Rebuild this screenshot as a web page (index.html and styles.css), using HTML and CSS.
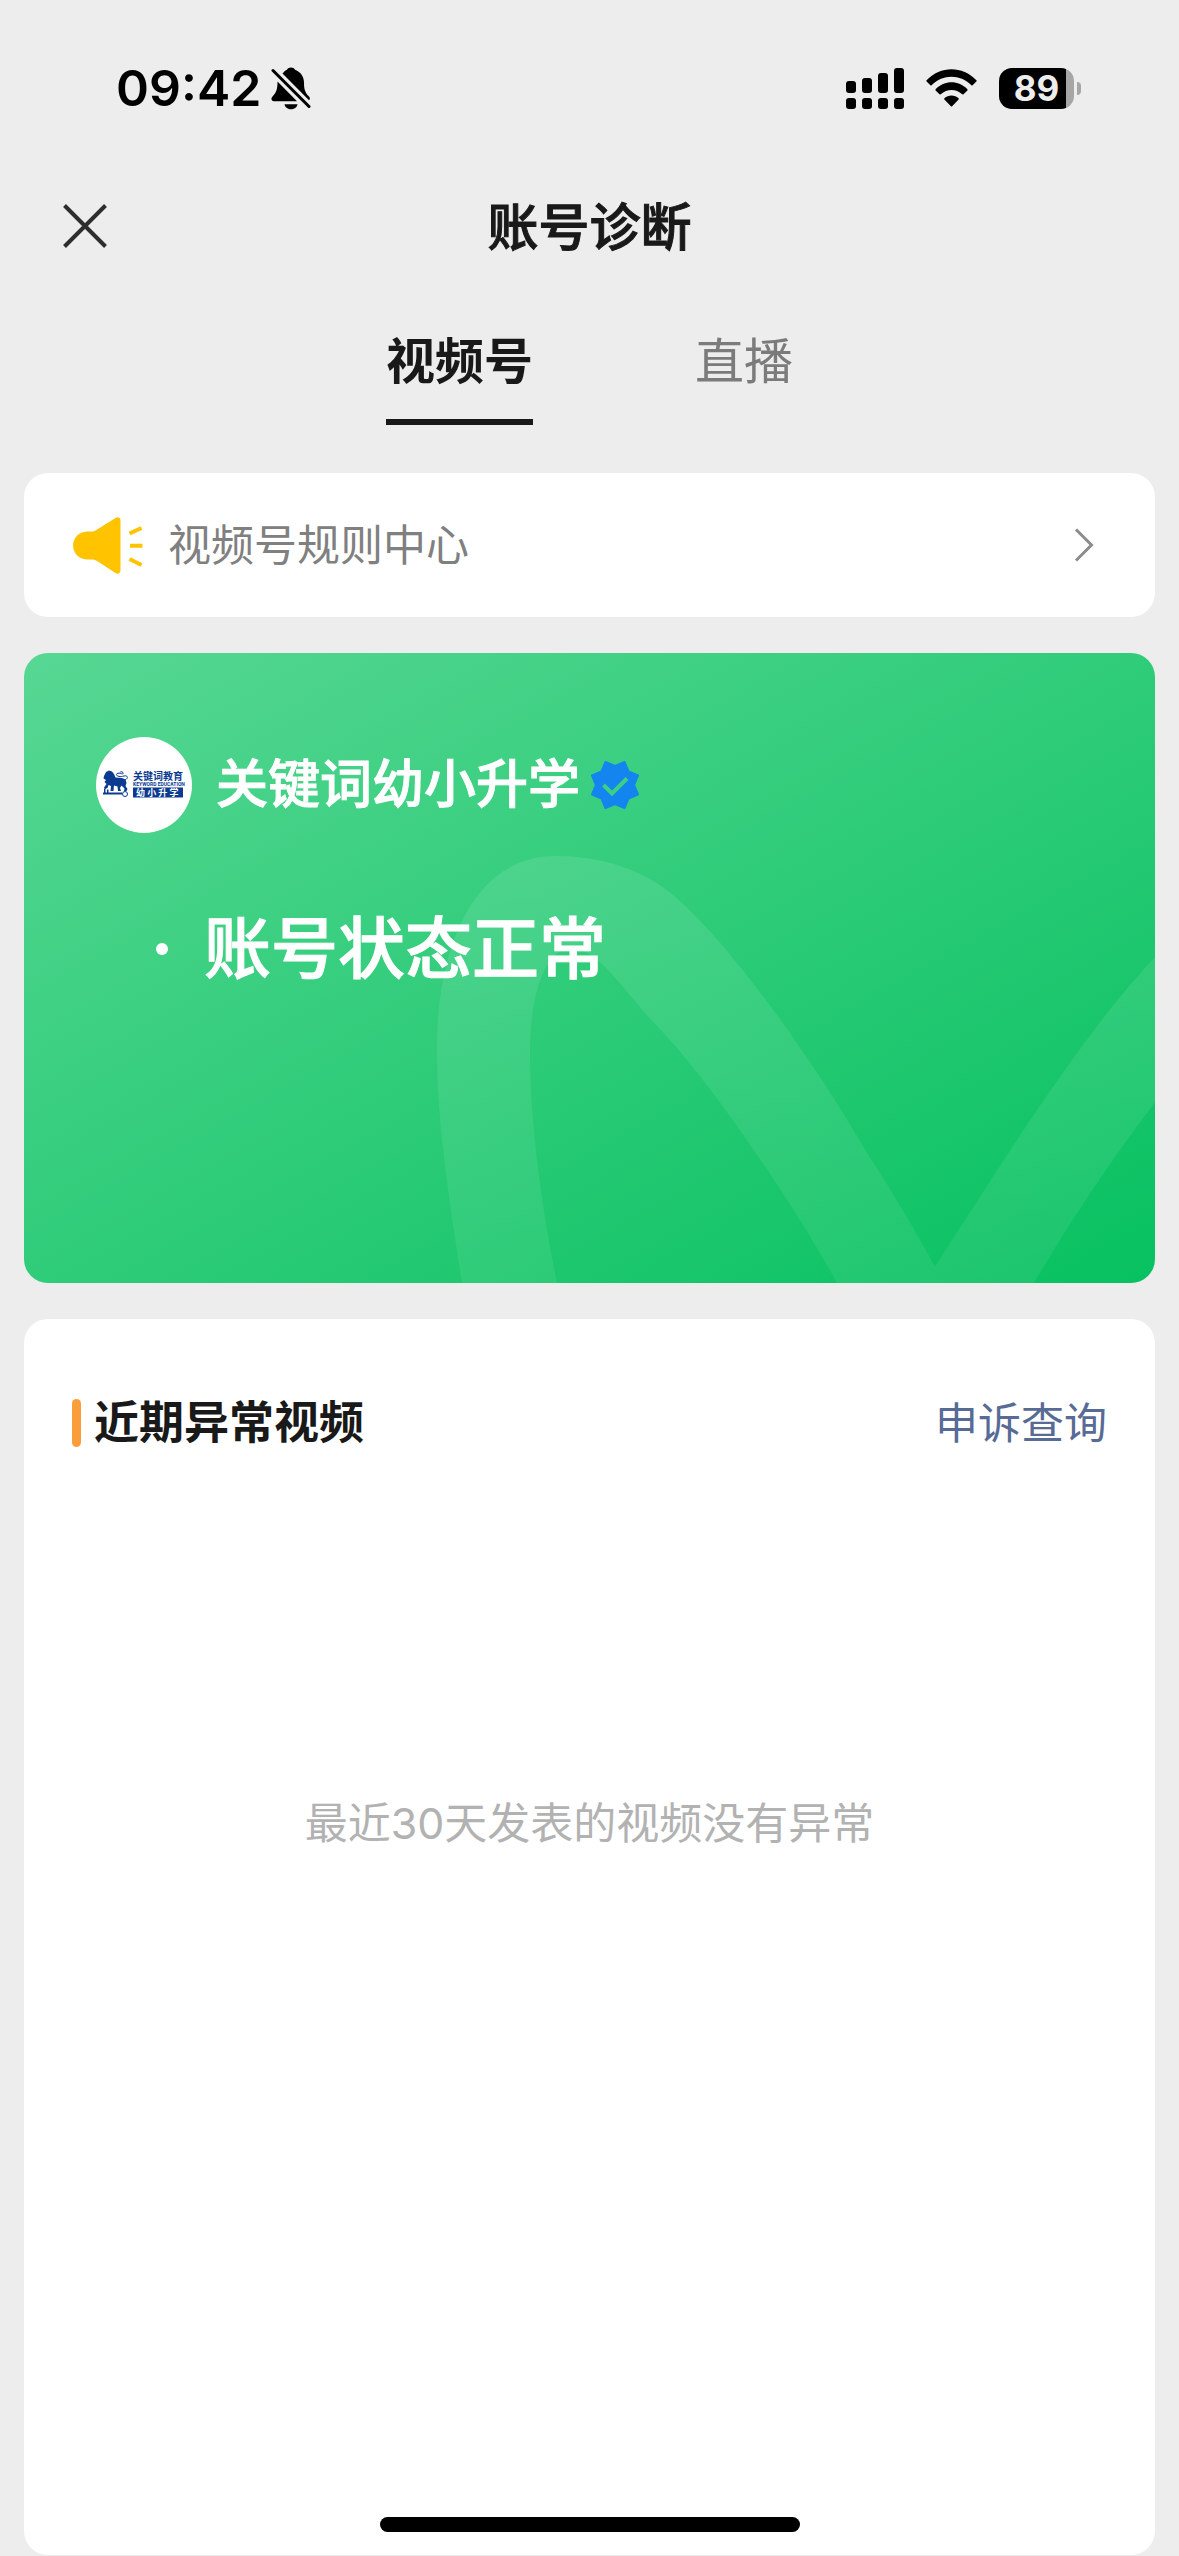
FILE: index.html
```html
<!DOCTYPE html>
<html lang="zh-CN">
<head>
    <meta charset="UTF-8">
    <meta name="viewport" content="width=device-width, initial-scale=1.0">
    <title>账号诊断</title>
    <link rel="stylesheet" href="styles.css">
</head>
<body>
    <!-- Status Bar -->
    <div class="status-bar">
        <div class="status-left">
            <span class="time">09:42</span>
            <svg class="bell" viewBox="0 0 40 43" width="40" height="43">
                <path d="M11.5 6.5C13 4.5 14.500 3.500 16 2.800C17.200-.2 22.800-.2 24 2.800C30 5 33 10 33 16C33 23 34.500 26 38 29.500C39.300 31 39 32.500 38 33.300Z"/>
                <path d="M6.500 14.500L26 34.300H3C.5 34.300-.5 31.500 1.500 29.500C5.500 25.500 6.500 22 6.500 14.500Z"/>
                <path d="M13.500 37.300H26.500C25.500 44 14.500 44 13.500 37.300Z"/>
                <path d="M2 3.500L38 39.500" stroke="#ededed" stroke-width="7"/>
                <path d="M2 3.500L38 39.500" stroke="#000" stroke-width="3" stroke-linecap="round"/>
            </svg>
        </div>
        <div class="status-right">
            <svg viewBox="0 0 58 41" width="58" height="41">
                <rect x="0" y="13" width="10" height="12" rx="3"/>
                <rect x="16" y="10" width="10" height="15" rx="3"/>
                <rect x="32" y="5" width="10" height="20" rx="3"/>
                <rect x="48" y="0" width="10" height="25" rx="3"/>
                <rect x="0" y="30" width="10" height="11" rx="3"/>
                <rect x="16" y="30" width="10" height="11" rx="3"/>
                <rect x="32" y="30" width="10" height="11" rx="3"/>
                <rect x="48" y="30" width="10" height="11" rx="3"/>
            </svg>
            <svg class="wifi" viewBox="0 0 51 38" width="51" height="38">
                <path d="M.6 11.300C14.500-3.400 36.500-3.400 50.400 11.300Q50.900 12 50.400 12.600L46.600 16.200Q46 16.700 45.400 16.200C34 5 17 5 5.600 16.200Q5 16.700 4.400 16.200L.6 12.600Q.1 12 .6 11.300Z"/>
                <path d="M9.600 20.300C18.500 11 32.500 11 41.400 20.300Q41.900 21 41.400 21.500L37.500 25.300Q36.900 25.800 36.300 25.300C30 19.500 21 19.500 14.700 25.300Q14.100 25.800 13.500 25.300L9.600 21.500Q9.100 21 9.600 20.300Z"/>
                <path d="M18.400 29.300C22.500 25.500 28.500 25.500 32.600 29.300Q33.200 30 32.600 30.600L26.100 37.200Q25.500 37.700 24.900 37.200L18.400 30.600Q17.800 30 18.400 29.300Z"/>
            </svg>
            <div class="battery"><span class="battery-level">89</span></div>
        </div>
    </div>

    <!-- Title -->
    <header class="navbar">
        <button class="close" aria-label="关闭">
            <svg viewBox="0 0 44 44" width="44" height="44">
                <path d="M1.500 1.500L42.500 42.500M42.500 1.500L1.500 42.500" fill="none" stroke="#2e2e2e" stroke-width="4"/>
            </svg>
        </button>
        <h1>账号诊断</h1>
    </header>

    <nav class="tabs">
        <button class="tab active">视频号</button>
        <button class="tab">直播</button>
    </nav>

    <main>
        <a class="rules" href="#">
            <svg viewBox="0 0 70 57" width="70" height="57">
                <path d="M16 14.500H18C20.500 14.500 22 14 24 12.500L42.500 1C45 -.6 47.500.8 47.500 3.500V53.500C47.500 56.200 45 57.600 42.500 56L24 44C22 42.700 20.500 42.500 18 42.500H14C-4.500 41.500-4.500 15.500 14 14.500Z" fill="#ffc300"/>
                <path d="M56.500 16.500L68.500 11M57 28.800H69.500M56.500 42L68.500 48" fill="none" stroke="#ffc300" stroke-width="4"/>
            </svg>
            <span class="rules-text">视频号规则中心</span>
            <svg viewBox="0 0 20 36" width="20" height="36">
                <path d="M2 2.500L17.500 18L2 33.500" fill="none" stroke="#8c8c8c" stroke-width="3"/>
            </svg>
        </a>

        <section class="account">
            <!-- Background mark -->
            <svg class="mark" viewBox="0 0 1131 630" preserveAspectRatio="xMaxYMax slice">
                <defs>
                    <linearGradient id="fade" x1="0" y1="0" x2="0" y2="1">
                        <stop offset="0" stop-color="#fff" stop-opacity=".1"/>
                        <stop offset="1" stop-color="#fff" stop-opacity=".07"/>
                    </linearGradient>
                </defs>
                <path fill="url(#fade)" d="M438 630C425 545 413 470 413 397C413 280 458 203 531 203C575 203 612 215 640 235C695 275 785 400 843 500C866 535 890 575 911 614C980 507 1055 385 1131 304V449C1085 510 1045 570 1010 630H813C775 560 690 432 634 374C605 345 575 295 548 295C520 295 506 345 506 397C506 470 517 550 533 630Z"/>
            </svg>
            <div class="profile">
                <svg class="avatar" viewBox="0 0 96 96" width="96" height="96">
                    <circle cx="48" cy="48" r="48" fill="#fff"/>
                    <g fill="#0b3b91">
                        <path d="M8 39L10 35L13 33.500L16 34.500L18 37L19.500 40.500L26 41L29.500 42.500L30.500 46L29.500 49L31.500 52L30.500 54H28L28.500 51.500L25.500 48.500L24 51L25 54H22L21.500 49.500L18 48.500L17.500 54H14.500L15 49L12.500 48L11.500 51L9 52L8 50.500L10.500 47L8.500 45L10 43L7.500 41.500Z"/>
                        <path d="M7 55.500H26V57.500H7ZM8 51.500H9.500V56H8ZM11 52.500H12.500V56H11Z"/>
                        <path d="M29 43C33 41 31.500 38 28 39C24.500 40 20.500 39.500 20.500 37.500C20.500 36 23 36 24.500 36.500C27 37.300 28 36.500 27 35.500C26 34.500 24 34.500 24 35.500" fill="none" stroke="#0b3b91"/>
                        <circle cx="29" cy="57" r="2.500" fill="none" stroke="#0b3b91"/>
                        <rect x="37" y="50.500" width="50" height="10"/>
                        <text class="logo-name" x="37" y="43">关键词教育</text>
                        <text class="logo-en" x="37" y="49">KEYWORD EDUCATION</text>
                    </g>
                    <text class="logo-sub" x="40" y="59">幼 小 升 学</text>
                </svg>
                <span class="name">关键词幼小升学</span>
                <svg class="verified" viewBox="0 0 48 48" width="48" height="48">
                    <path d="M24 5L33.500 1L37.500 10.500L47 14.500L43 24L47 33.500L37.500 37.500L33.500 47L24 43L14.500 47L10.500 37.500L1 33.500L5 24L1 14.500L10.500 10.500L14.500 1Z" fill="#1485ee" stroke="#1485ee" stroke-width="2" stroke-linejoin="round"/>
                    <path d="M12.500 24L21 32.500L36 17.500" fill="none" stroke="#3ecf82" stroke-width="4"/>
                </svg>
            </div>
            <div class="account-status">
                <span class="dot"></span>
                <span>账号状态正常</span>
            </div>
        </section>

        <section class="videos">
            <div class="videos-head">
                <h2>近期异常视频</h2>
                <a href="#">申诉查询</a>
            </div>
            <p class="empty">最近30天发表的视频没有异常</p>
        </section>
    </main>

    <div class="home-indicator"></div>
</body>
</html>
```

FILE: styles.css
```css
* {
    box-sizing: border-box;
}
body {
    margin: 0;
    min-height: 100vh;
    display: flex;
    flex-direction: column;
    background-color: #ededed;
    color: #191919;
    font-family: Inter, "Noto Sans CJK SC", sans-serif;
}
svg {
    display: block;
    flex: none;
}
button {
    padding: 0;
    border: none;
    background: none;
    font-family: inherit;
    cursor: pointer;
}
a {
    text-decoration: none;
}
h1, h2, p {
    margin: 0;
}

/* status bar */
.status-bar {
    height: 176px;
    padding: 0 105px 0 116px;
    display: flex;
    align-items: center;
    justify-content: space-between;
    color: #000;
}
.status-left, .status-right {
    display: flex;
    align-items: center;
}
.status-left {
    gap: 10px;
}
.status-right {
    gap: 22px;
}
.time {
    font-size: 50px;
    font-weight: 600;
    line-height: 60px;
}
.battery {
    position: relative;
    width: 75px;
    height: 41px;
    border-radius: 13px;
    background: linear-gradient(to right, #000 67px, #a6a6a6 67px);
    text-align: center;
}
.battery::after {
    content: "";
    position: absolute;
    left: 78px;
    top: 14px;
    width: 4px;
    height: 13px;
    border-radius: 0 4px 4px 0;
    background-color: #a6a6a6;
}
.battery-level {
    color: #ededed;
    font-size: 35px;
    font-weight: 700;
    line-height: 41px;
}

/* title and tabs */
.navbar {
    position: relative;
    height: 100px;
    padding-top: 4px;
    display: flex;
    align-items: center;
    justify-content: center;
}
.navbar h1 {
    font-size: 51px;
    font-weight: 500;
    line-height: 72px;
    -webkit-text-stroke: 1px;
}
.close {
    position: absolute;
    left: 63px;
    top: 28px;
}
.tabs {
    display: flex;
    justify-content: center;
    gap: 162px;
    padding-top: 50px;
    margin-bottom: 48px;
}
.tab {
    padding-bottom: 21px;
    border-bottom: 6px solid transparent;
    color: #7b7b7b;
    font-size: 49px;
    line-height: 72px;
}
.tab.active {
    border-color: #191919;
    color: #191919;
    font-weight: 700;
}

/* cards */
main {
    flex: 1;
    display: flex;
    flex-direction: column;
    gap: 36px;
    padding: 0 24px 1px;
}
.rules, .account, .videos {
    border-radius: 24px;
    background-color: #fff;
}
.rules {
    height: 144px;
    padding: 0 61px 0 49px;
    display: flex;
    align-items: center;
    gap: 25px;
    color: #808080;
    font-size: 43px;
}
.rules-text {
    flex: 1;
    line-height: 64px;
}
.account {
    position: relative;
    height: 630px;
    padding: 84px 72px 0;
    overflow: hidden;
    background: linear-gradient(to bottom right, #57d793, #07c160);
    color: #fff;
    font-weight: 500;
}
.mark {
    position: absolute;
    left: 0;
    top: 0;
    width: 100%;
    height: 100%;
}
.profile, .account-status {
    position: relative;
    display: flex;
    align-items: center;
}
.name {
    margin: 0 11px 0 24px;
    font-size: 52px;
    line-height: 72px;
    -webkit-text-stroke: 1px;
}
.logo-name {
    font-size: 10px;
    font-weight: 700;
}
.logo-en {
    font-family: Roboto, sans-serif;
    font-size: 5px;
    font-weight: 700;
}
.logo-sub {
    font-size: 9px;
    font-weight: 700;
    fill: #fff;
}
.account-status {
    gap: 36px;
    margin: 68px 0 0 60px;
    font-size: 67px;
    line-height: 96px;
    -webkit-text-stroke: 1px;
}
.dot {
    width: 12px;
    height: 12px;
    border-radius: 50%;
    background-color: #fff;
}
.videos {
    flex: 1;
    padding: 72px 48px;
}
.videos-head {
    display: flex;
    align-items: center;
    justify-content: space-between;
    line-height: 64px;
}
.videos-head h2 {
    display: flex;
    align-items: center;
    gap: 13px;
    font-size: 45px;
    font-weight: 700;
}
.videos-head h2::before {
    content: "";
    width: 9px;
    height: 48px;
    border-radius: 5px;
    background-color: #fa9d3b;
}
.videos-head a {
    color: #576b95;
    font-size: 43px;
}
.empty {
    margin-top: 336px;
    color: #b2b2b2;
    font-size: 43px;
    line-height: 64px;
    text-align: center;
}

.home-indicator {
    position: fixed;
    left: 50%;
    bottom: 24px;
    width: 420px;
    height: 15px;
    margin-left: -210px;
    border-radius: 8px;
    background-color: #000;
}
```
